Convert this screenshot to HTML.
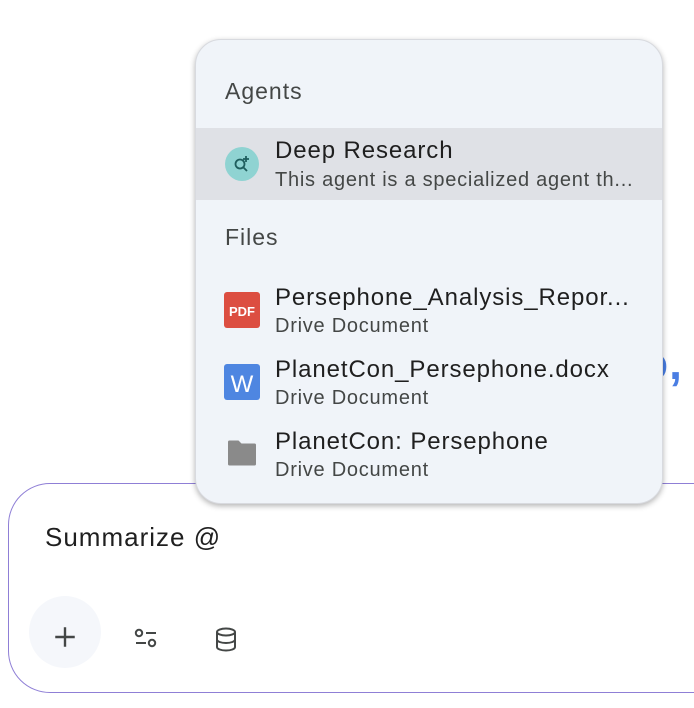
<!DOCTYPE html>
<html><head><meta charset="utf-8"><style>
*{margin:0;padding:0;box-sizing:border-box}
body{width:694px;height:708px;background:#fff;position:relative;overflow:hidden;font-family:"Liberation Sans",Arial,sans-serif;color:#1f1f1f}
.bg{position:absolute;left:640px;top:336px;font-size:46px;font-weight:bold;color:#4a7ee3;letter-spacing:1px}
.input{position:absolute;left:8px;top:483px;width:760px;height:210px;border:1.3px solid #8f7fd6;border-radius:42px;background:#fff}
.input .txt{position:absolute;left:36px;top:38px;font-size:26px;color:#1f1f1f;letter-spacing:1px}
.plus{position:absolute;left:20px;top:112px;width:72px;height:72px;border-radius:50%;background:#f5f7fb}
.pop{position:absolute;left:195px;top:39px;width:468px;height:465px;background:#f0f4f9;border-radius:26px;box-shadow:0 2px 6px rgba(0,0,0,.3);overflow:hidden;border:1px solid #d8dadf}
.h{position:absolute;left:29px;font-size:23px;color:#444746;letter-spacing:1px}
.hl{position:absolute;left:0;top:88px;width:100%;height:72px;background:#dfe1e6}
.t{position:absolute;left:79px;font-size:24px;color:#1f1f1f;white-space:nowrap;letter-spacing:0.9px}
.s{position:absolute;left:79px;font-size:20px;color:#444746;white-space:nowrap;letter-spacing:0.75px}
.ic{position:absolute;left:28px}
</style></head><body>
<div class="bg">o,</div>
<div class="input">
<div class="txt">Summarize @</div>
<div class="plus"></div>
<svg style="position:absolute;left:43px;top:140px" width="26" height="26" viewBox="0 0 24 24"><path d="M12 3v18M3 12h18" stroke="#444746" stroke-width="2.2" fill="none"/></svg>
<svg style="position:absolute;left:124px;top:143px" width="28" height="24" viewBox="0 0 28 24"><circle cx="6" cy="6" r="3.2" stroke="#444746" stroke-width="2" fill="none"/><path d="M13 6h10M3 16h10" stroke="#444746" stroke-width="2"/><circle cx="19" cy="16" r="3.2" stroke="#444746" stroke-width="2" fill="none"/></svg>
<svg style="position:absolute;left:204px;top:143px" width="26" height="26" viewBox="0 0 26 26"><ellipse cx="13" cy="5" rx="9" ry="3.5" stroke="#444746" stroke-width="2" fill="none"/><path d="M4 5v15c0 2 4 3.5 9 3.5s9-1.5 9-3.5V5M4 12.5c0 2 4 3.5 9 3.5s9-1.5 9-3.5" stroke="#444746" stroke-width="2" fill="none"/></svg>
</div>
<div class="pop">
<div class="h" style="top:38px">Agents</div>
<div class="hl"></div>
<svg class="ic" style="top:106px;left:28px" width="36" height="36" viewBox="0 0 36 36"><circle cx="18" cy="18" r="17" fill="#8fd3d2"/><circle cx="16" cy="18" r="4.5" stroke="#1f5e5e" stroke-width="1.8" fill="none"/><path d="M19 21l4 4M22 10v6M19 13h6" stroke="#1f5e5e" stroke-width="1.8"/></svg>
<div class="t" style="top:97px">Deep Research</div>
<div class="s" style="top:129px">This agent is a specialized agent th...</div>
<div class="h" style="top:184px">Files</div>
<svg class="ic" style="top:252px" width="36" height="36" viewBox="0 0 36 36"><rect width="36" height="36" rx="3" fill="#dc4e41"/><text x="18" y="24" font-size="13" font-weight="bold" fill="#fff" text-anchor="middle" font-family="Liberation Sans">PDF</text></svg>
<div class="t" style="top:244px">Persephone_Analysis_Repor...</div>
<div class="s" style="top:275px">Drive Document</div>
<svg class="ic" style="top:324px" width="36" height="36" viewBox="0 0 36 36"><rect width="36" height="36" rx="3" fill="#4e86e1"/><text x="18" y="28" font-size="24" fill="#fff" text-anchor="middle" font-family="Liberation Sans">W</text></svg>
<div class="t" style="top:316px">PlanetCon_Persephone.docx</div>
<div class="s" style="top:347px">Drive Document</div>
<svg class="ic" style="top:400px;left:31px" width="30" height="26" viewBox="0 0 30 26"><path d="M1 2c0-1 .5-1.5 1.5-1.5h9l3 3h13c1 0 1.5.5 1.5 1.5v19c0 1-.5 1.5-1.5 1.5h-25C1.5 25.5 1 25 1 24z" fill="#8a8a8a"/></svg>
<div class="t" style="top:388px">PlanetCon: Persephone</div>
<div class="s" style="top:419px">Drive Document</div>
</div>
</body></html>
